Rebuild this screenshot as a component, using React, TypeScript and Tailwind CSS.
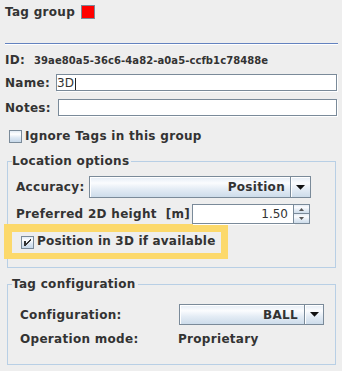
import React from "react";

const GRAD = "bg-[linear-gradient(180deg,#e4ecf5_0%,#fbfcfe_30%,#e4ecf5_60%,#cddcea_100%)]";

function Checkbox({ checked }: { checked?: boolean }) {
  return (
    <svg width="13" height="13" viewBox="0 0 13 13" shapeRendering="crispEdges" className="shrink-0 block">
      <defs>
        <linearGradient id={checked ? "cbg1" : "cbg0"} x1="0" y1="0" x2="0" y2="1">
          <stop offset="0" stopColor="#dde8f3" />
          <stop offset="0.3" stopColor="#ffffff" />
          <stop offset="0.6" stopColor="#dde8f3" />
          <stop offset="1" stopColor="#c4d6e8" />
        </linearGradient>
      </defs>
      <rect x="0.5" y="0.5" width="12" height="12" fill={`url(#${checked ? "cbg1" : "cbg0"})`} stroke="#7a8a99" />
      {checked && (
        <g fill="#333333">
          <rect x="3" y="5" width="2" height="5" />
          <rect x="9" y="3" width="1" height="2" />
          <rect x="8" y="4" width="1" height="2" />
          <rect x="7" y="5" width="1" height="2" />
          <rect x="6" y="6" width="1" height="2" />
          <rect x="5" y="7" width="1" height="2" />
        </g>
      )}
    </svg>
  );
}

function Arrow() {
  return (
    <svg width="9" height="5" viewBox="0 0 9 5" className="block">
      <polygon points="0,0 9,0 4.5,4.8" fill="#111111" />
    </svg>
  );
}

export default function App() {
  return (
    <div className="w-[342px] h-[371px] bg-[#eeeeee] font-['DejaVu_Sans',sans-serif] font-bold text-[12px] leading-[14px] tracking-[0.3px] text-[#333333] overflow-hidden">
      {/* Header */}
      <div className="pt-[5px] pl-[5px] flex items-start gap-[6px]">
        <span>Tag group</span>
        <span className="w-[14px] h-[14px] bg-[#ff0000] border border-[#7a8a99]" />
      </div>

      {/* Separator */}
      <div className="mt-[24px] ml-[5px] w-[333px] h-[1px] bg-[#6382bf] shadow-[0_1px_0_#ffffff]" />

      {/* ID */}
      <div className="mt-[9px] pl-[5px] flex items-baseline">
        <span className="w-[29px]">ID:</span>
        <span className="text-[10px] tracking-[0.08px]">39ae80a5-36c6-4a82-a0a5-ccfb1c78488e</span>
      </div>

      {/* Name */}
      <div className="mt-[6px] pl-[5px] flex items-center h-[18px]">
        <span className="w-[51px]">Name:</span>
        <div className="self-start w-[281px] h-[17px] border border-[#7a8a99] bg-white shadow-[1px_1px_0_#ffffff] font-normal tracking-normal leading-[16px] flex items-start">
          <span>3D</span>
          <span className="inline-block w-[1px] h-[12px] bg-[#222222] mt-[3px] ml-[1px]" />
        </div>
      </div>

      {/* Notes */}
      <div className="mt-[7px] pl-[5px] flex items-center h-[18px]">
        <span className="w-[53px]">Notes:</span>
        <div className="self-start w-[279px] h-[17px] border border-[#7a8a99] bg-white shadow-[1px_1px_0_#ffffff]" />
      </div>

      {/* Ignore checkbox */}
      <div className="mt-[12px] pl-[9px] flex items-center h-[14px] gap-[3px]">
        <Checkbox />
        <span>Ignore Tags in this group</span>
      </div>

      {/* Location options */}
      <fieldset className="mt-[11px] ml-[7px] w-[329px] border border-[#b8cfe5] pb-[8px]">
        <legend className="ml-[4px] pr-[2px]">Location options</legend>

        <div className="mt-[8px] pl-[8px] flex items-center h-[22px]">
          <span className="w-[73px]">Accuracy:</span>
          <div className={`flex w-[222px] h-[22px] border border-[#7a8a99] ${GRAD}`}>
            <div className="flex-1 flex items-center justify-end pr-[5px] border-r border-[#7a8a99] shadow-[inset_1px_1px_0_#ffffff]">
              Position
            </div>
            <div className="w-[19px] flex items-center justify-center shadow-[inset_1px_1px_0_#ffffff]">
              <Arrow />
            </div>
          </div>
        </div>

        <div className="mt-[6px] pl-[8px] flex items-center h-[20px]">
          <span className="w-[176px] whitespace-pre">Preferred 2D height  [m]</span>
          <div className="flex w-[118px] h-[20px]">
            <div className="w-[102px] h-[20px] border border-[#7a8a99] bg-white shadow-[1px_1px_0_#ffffff] font-normal tracking-normal flex items-center justify-end pr-[5px]">
              1.50
            </div>
            <div className="flex flex-col w-[16px]">
              <div className={`h-[10px] border border-l-0 border-[#7a8a99] ${GRAD} flex items-center justify-center`}>
                <svg width="5" height="3" viewBox="0 0 5 3" className="block">
                  <polygon points="2.5,0 5,3 0,3" fill="#555555" />
                </svg>
              </div>
              <div className={`h-[10px] border border-l-0 border-t-0 border-[#7a8a99] ${GRAD} flex items-center justify-center`}>
                <svg width="5" height="3" viewBox="0 0 5 3" className="block">
                  <polygon points="0,0 5,0 2.5,3" fill="#555555" />
                </svg>
              </div>
            </div>
          </div>
        </div>

        <div className="ml-[-4px] w-[224px] h-[35px] border-t-[8px] border-l-[8px] border-r-[7px] border-b-[6px] border-[#fcd96b] bg-[#eeeeee] flex items-start pl-[9px]">
          <div className="mt-[4px]">
            <Checkbox checked />
          </div>
          <span className="ml-[3px] mt-[2px] tracking-[0.2px]">Position in 3D if available</span>
        </div>
      </fieldset>

      {/* Tag configuration */}
      <fieldset className="mt-[9px] ml-[7px] w-[329px] border border-[#b8cfe5] pb-[18px]">
        <legend className="ml-[4px] pr-[2px]">Tag configuration</legend>

        <div className="mt-[13px] pl-[12px] flex items-center h-[21px]">
          <span className="w-[159px]">Configuration:</span>
          <div className={`flex w-[145px] h-[21px] border border-[#7a8a99] ${GRAD}`}>
            <div className="flex-1 flex items-center justify-end pr-[6px] border-r border-[#7a8a99] shadow-[inset_1px_1px_0_#ffffff]">
              BALL
            </div>
            <div className="w-[18px] flex items-center justify-center shadow-[inset_1px_1px_0_#ffffff]">
              <Arrow />
            </div>
          </div>
        </div>

        <div className="mt-[7px] pl-[12px] flex items-center h-[14px]">
          <span className="w-[158px]">Operation mode:</span>
          <span>Proprietary</span>
        </div>
      </fieldset>
    </div>
  );
}
